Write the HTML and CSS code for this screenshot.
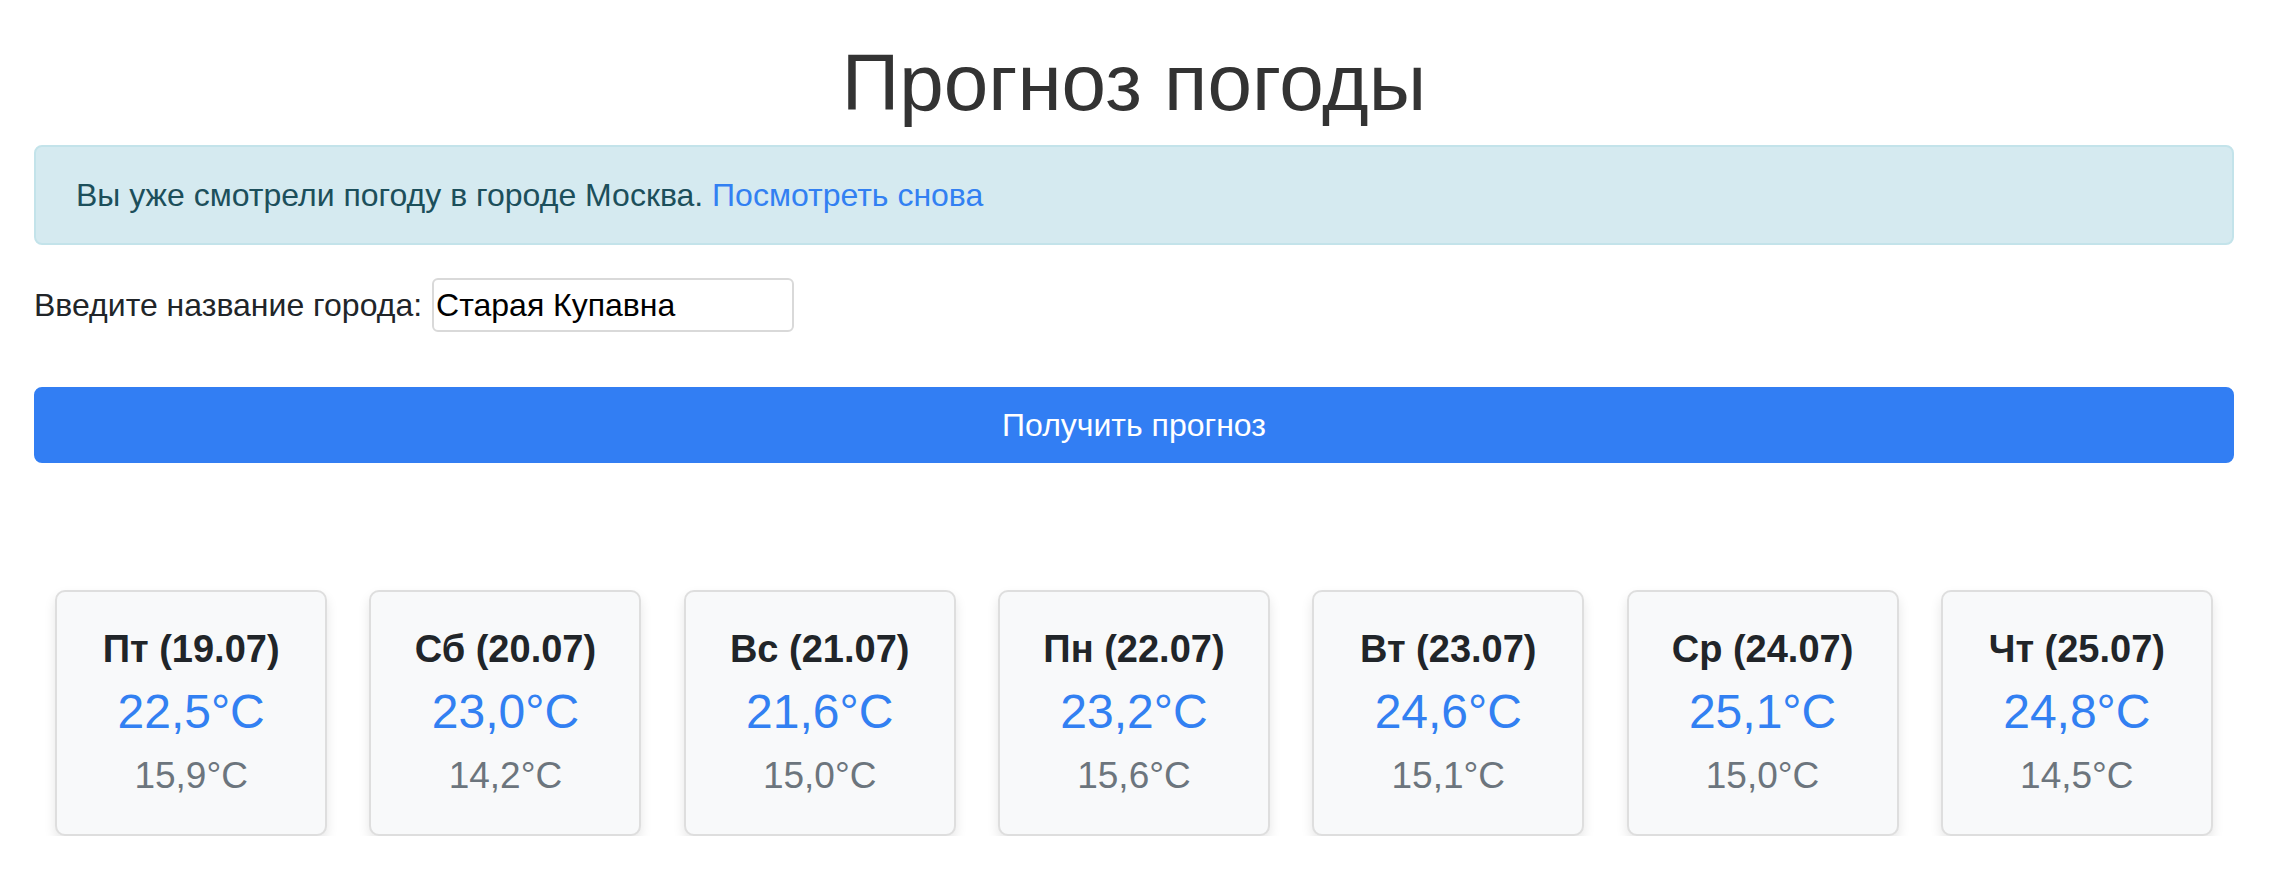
FILE: index.html
```html
<!DOCTYPE html>
<html lang="ru">
<head>
<meta charset="utf-8">
<title>Прогноз погоды</title>
<link rel="stylesheet" href="styles.css">
</head>
<body>
<div class="page">
  <h1 class="title">Прогноз погоды</h1>
  <div class="alert">Вы уже смотрели погоду в городе Москва. <a class="alert-link" href="#">Посмотреть снова</a></div>
  <form class="city-form">
    <div class="form-row">
      <label class="city-label" for="city">Введите название города:</label>
      <input class="city-input" id="city" type="text" value="Старая Купавна">
    </div>
    <button class="submit-btn" type="button">Получить прогноз</button>
  </form>
  <div class="forecast">
    <div class="day-card"><div class="day-name">Пт (19.07)</div><div class="t-max">22,5°C</div><div class="t-min">15,9°C</div></div>
    <div class="day-card"><div class="day-name">Сб (20.07)</div><div class="t-max">23,0°C</div><div class="t-min">14,2°C</div></div>
    <div class="day-card"><div class="day-name">Вс (21.07)</div><div class="t-max">21,6°C</div><div class="t-min">15,0°C</div></div>
    <div class="day-card"><div class="day-name">Пн (22.07)</div><div class="t-max">23,2°C</div><div class="t-min">15,6°C</div></div>
    <div class="day-card"><div class="day-name">Вт (23.07)</div><div class="t-max">24,6°C</div><div class="t-min">15,1°C</div></div>
    <div class="day-card"><div class="day-name">Ср (24.07)</div><div class="t-max">25,1°C</div><div class="t-min">15,0°C</div></div>
    <div class="day-card"><div class="day-name">Чт (25.07)</div><div class="t-max">24,8°C</div><div class="t-min">14,5°C</div></div>
  </div>
</div>
</body>
</html>
```

FILE: styles.css
```css
* { box-sizing: border-box; }

body {
  margin: 0;
  background: #fff;
  font-family: "Liberation Sans", Arial, sans-serif;
  color: #212529;
  font-size: 32px;
  line-height: 48px;
}

.page {
  width: 2200px;
  margin: 0 34px;
}

.title {
  margin: 35px 0 14px;
  font-size: 80px;
  line-height: 96px;
  font-weight: 400;
  color: #333;
  text-align: center;
}

.alert {
  height: 100px;
  padding: 24px 40px;
  border: 2px solid #c3e3ea;
  border-radius: 8px;
  background: #d5eaf0;
  color: #1c4f5b;
  margin-bottom: 33px;
}

.alert-link {
  color: #3280f2;
  text-decoration: none;
}

.city-form { margin: 0; }

.form-row {
  display: flex;
  align-items: center;
  gap: 10px;
  height: 54px;
  margin-bottom: 55px;
}

.city-label { color: #212529; }

.city-input {
  width: 362px;
  height: 54px;
  padding: 0 4px 0 2px;
  border: 2px solid #d9d9d9;
  border-radius: 6px;
  font-family: "Liberation Sans", Arial, sans-serif;
  font-size: 32px;
  color: #000;
  background: #fff;
}

.submit-btn {
  display: block;
  width: 100%;
  height: 76px;
  padding: 12px 24px;
  border: 2px solid #327ef3;
  border-radius: 8px;
  background: #327ef3;
  color: #fff;
  font-family: "Liberation Sans", Arial, sans-serif;
  font-size: 32px;
  line-height: 48px;
}

.forecast {
  display: flex;
  justify-content: space-around;
  margin-top: 127px;
}

.day-card {
  width: 272px;
  padding: 34px 0 36px;
  border: 2px solid #dedede;
  border-radius: 10px;
  background: #f8f9fa;
  box-shadow: 0 6px 12px rgba(0, 0, 0, 0.1);
  text-align: center;
}

.day-name {
  font-size: 38px;
  line-height: 46px;
  font-weight: 700;
  color: #212529;
}

.t-max {
  margin-top: 11px;
  font-size: 48px;
  line-height: 58px;
  color: #3280f2;
}

.t-min {
  margin-top: 13px;
  font-size: 37px;
  line-height: 44px;
  color: #6c757d;
}
```
